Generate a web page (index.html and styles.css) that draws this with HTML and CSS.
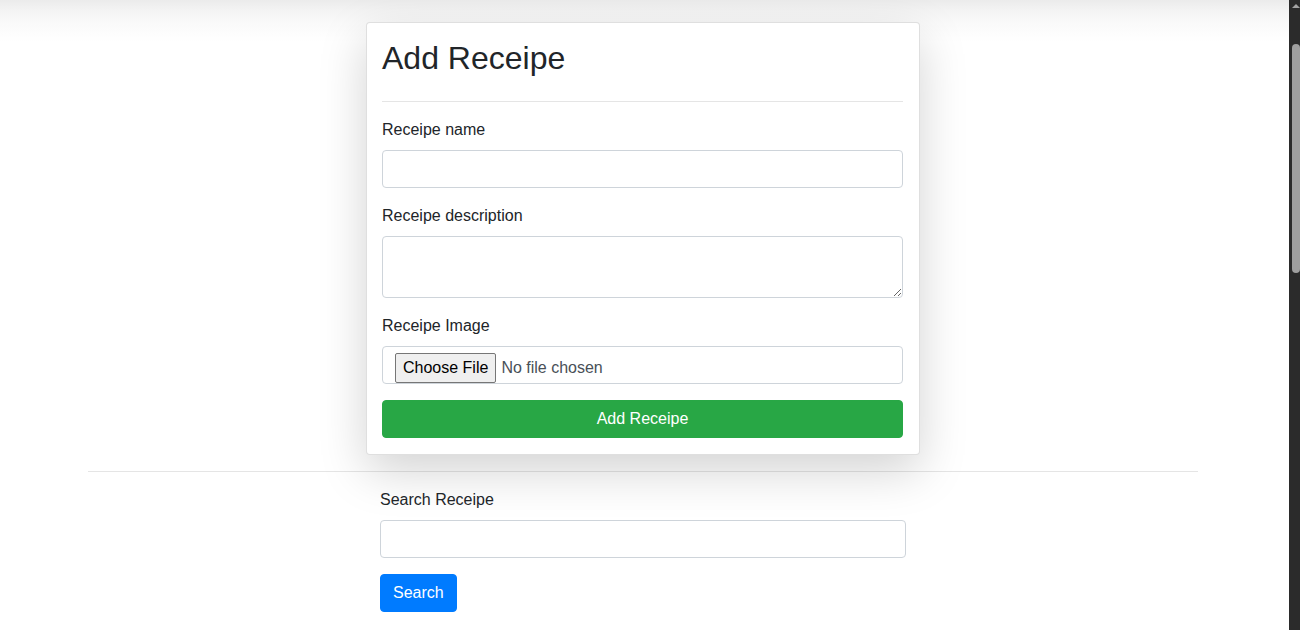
FILE: index.html
```html
<!DOCTYPE html>
<html lang="en">
<head>
<meta charset="utf-8">
<title>Receipes</title>
<link rel="stylesheet" href="styles.css">
</head>
<body>
<main class="viewport">
  <div class="page">
    <section class="card">
      <h2 class="card-title">Add Receipe</h2>
      <hr class="card-rule">
      <form class="form">
        <div class="form-group">
          <label class="label" for="name">Receipe name</label>
          <input class="control" id="name" type="text">
        </div>
        <div class="form-group">
          <label class="label" for="desc">Receipe description</label>
          <textarea class="control textarea" id="desc" rows="2"></textarea>
        </div>
        <div class="form-group">
          <label class="label" for="img">Receipe Image</label>
          <input class="control file" id="img" type="file">
        </div>
        <button class="btn btn-green" type="button">Add Receipe</button>
      </form>
    </section>
    <hr class="divider">
    <section class="search">
      <div class="form-group">
        <label class="label" for="q">Search Receipe</label>
        <input class="control" id="q" type="text">
      </div>
      <button class="btn btn-blue" type="button">Search</button>
    </section>
  </div>
</main>
<div class="scrollbar" aria-hidden="true">
  <div class="scroll-arrow"></div>
  <div class="scroll-thumb"></div>
</div>
</body>
</html>
```
FILE: styles.css
```css
html, body {
  margin: 0;
  padding: 0;
  height: 630px;
  overflow: hidden;
}

body {
  display: flex;
  font-family: "Liberation Sans", Arial, sans-serif;
  font-size: 16px;
  line-height: 1.5;
  color: #212529;
  background: #fff;
}

.viewport {
  flex: 1;
  min-width: 0;
  height: 630px;
  overflow: hidden;
  background: #fff linear-gradient(#ebebeb 0, #f3f3f3 10px, #fafafa 24px, #fff 42px) no-repeat top left / 100% 42px;
}

.scrollbar {
  width: 11px;
  flex: none;
  height: 630px;
  background: #2b2b2b;
  display: flex;
  flex-direction: column;
  align-items: flex-end;
}

.scroll-arrow {
  width: 0;
  height: 0;
  margin-top: 4px;
  border-left: 4px solid transparent;
  border-right: 4px solid transparent;
  border-bottom: 4px solid #a3a3a3;
}

.scroll-thumb {
  width: 8px;
  height: 229px;
  margin-top: 36px;
  background: #9f9f9f;
  border-radius: 4px;
}

.page {
  width: 1110px;
  margin-left: 88px;
  padding-top: 22px;
  display: flex;
  flex-direction: column;
}

.card {
  width: 554px;
  box-sizing: border-box;
  align-self: center;
  display: flex;
  flex-direction: column;
  background: #fff;
  border: 1px solid rgba(0, 0, 0, 0.125);
  border-radius: 4px;
  padding: 16px 16px 16px 15px;
  box-shadow: 0 16px 48px rgba(0, 0, 0, 0.175);
}

.card-title {
  margin: 0 0 8px;
  font-size: 32px;
  font-weight: 500;
  line-height: 1.2;
}

.card-rule, .divider {
  border: 0;
  border-top: 1px solid rgba(0, 0, 0, 0.1);
  margin: 16px 0;
  height: 0;
  width: 100%;
}

.form {
  display: flex;
  flex-direction: column;
}

.form-group {
  display: flex;
  flex-direction: column;
  margin-bottom: 16px;
}

.label {
  margin-bottom: 8px;
}

.control {
  box-sizing: border-box;
  height: 38px;
  width: 100%;
  padding: 6px 12px;
  font-family: inherit;
  font-size: 16px;
  line-height: 1.5;
  color: #495057;
  background: #fff;
  border: 1px solid #ced4da;
  border-radius: 4px;
  margin: 0;
}

.textarea {
  height: 62px;
  resize: vertical;
}

.file {
  padding: 6px 12px 0;
}

.file::file-selector-button {
  font-family: inherit;
  font-size: 16px;
  line-height: 24px;
  height: 30px;
  padding: 2px 7px;
  margin: 0 5px 0 0;
  color: #000;
  background: #efefef;
  border: 1px solid #767676;
  border-radius: 2px;
  box-sizing: border-box;
}

.btn {
  font-family: inherit;
  font-size: 16px;
  line-height: 1.5;
  color: #fff;
  border: 1px solid transparent;
  border-radius: 4px;
  padding: 6px 12px;
  height: 38px;
  box-sizing: border-box;
}

.btn-green {
  width: 100%;
  background: #28a745;
  border-color: #28a745;
}

.btn-blue {
  align-self: flex-start;
  background: #007bff;
  border-color: #007bff;
}

.search {
  width: 526px;
  align-self: center;
  display: flex;
  flex-direction: column;
}
```
